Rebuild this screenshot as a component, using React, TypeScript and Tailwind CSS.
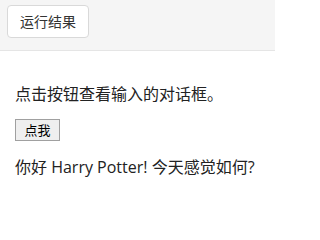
export default function App() {
  return (
    <div className="w-[275px] h-[223px] bg-white overflow-hidden font-['Open_Sans','Noto_Sans_CJK_SC',sans-serif] text-[#333]">
      <div className="h-[51px] bg-[#f5f5f5] border-b border-[#e5e5e5] px-[7px] pt-[5px]">
        <button className="h-[33px] px-[12px] bg-white border border-[#d9d9d9] rounded-[4px] text-[14px] text-[#333]">
          运行结果
        </button>
      </div>
      <div className="px-[15px] pt-[31px] text-[#222]">
        <p className="text-[16px] leading-[24px]">点击按钮查看输入的对话框。</p>
        <button className="mt-[13px] h-[22px] w-[45px] bg-[#efefef] border border-[#a0a0a0] text-[13px] leading-none text-black">
          点我
        </button>
        <p className="mt-[14px] text-[16px] leading-[24px]">你好 Harry Potter! 今天感觉如何?</p>
      </div>
    </div>
  );
}
